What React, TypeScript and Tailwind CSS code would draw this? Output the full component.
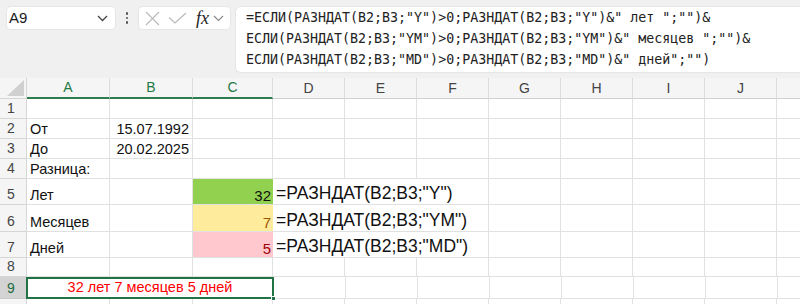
import React from "react";

const COLS = ["A", "B", "C", "D", "E", "F", "G", "H", "I", "J", ""];
const W = [83, 83, 80, 72, 72, 72, 72, 72, 72, 72, 23];

const cellFont = { fontFamily: '"Liberation Sans", Arial, sans-serif' };

function RowNum({ n, h, selected }: { n?: number; h: number; selected?: boolean }) {
  return (
    <div
      className={
        "w-[27px] shrink-0 flex items-end justify-center pr-[4px] pb-[1px] leading-[17px] border-r border-b text-[14px] " +
        (selected
          ? "bg-[#d3d3d3] text-[#1f6b40] border-r-[#1f7a45] border-b-[#c9c9c9]"
          : "bg-[#f5f5f5] text-[#444444] border-[#d6d6d6]")
      }
      style={{ height: h }}
    >
      {n}
    </div>
  );
}

function Empty({ w, h, noRight }: { w: number; h: number; noRight?: boolean }) {
  return (
    <div
      className={"shrink-0 border-b border-[#e1e1e1] " + (noRight ? "" : "border-r")}
      style={{ width: w, height: h }}
    />
  );
}

function TextCell({ w, h, children, cls = "" }: { w: number; h: number; children?: React.ReactNode; cls?: string }) {
  return (
    <div
      className={"shrink-0 border-r border-b border-[#e1e1e1] flex items-end pb-[0px] leading-[17px] whitespace-nowrap overflow-visible text-[14.5px] text-[#111] " + cls}
      style={{ width: w, height: h }}
    >
      {children}
    </div>
  );
}

function StdRow({ n, h, a, b }: { n?: number; h: number; a?: string; b?: string }) {
  return (
    <div className="flex">
      <RowNum n={n} h={h} />
      <TextCell w={W[0]} h={h} cls="pl-[3px]">{a}</TextCell>
      <TextCell w={W[1]} h={h} cls="justify-end pr-[3px]">{b}</TextCell>
      {W.slice(2).map((w, i) => (
        <Empty key={i} w={w} h={h} noRight={i === W.length - 3} />
      ))}
    </div>
  );
}

function ResultRow({ n, label, value, fill, color, formula }: { n: number; label: string; value: string; fill: string; color: string; formula: string }) {
  const h = n === 6 ? 27 : 26;
  return (
    <div className="flex">
      <RowNum n={n} h={h} />
      <TextCell w={W[0]} h={h} cls="pl-[3px]">{label}</TextCell>
      <TextCell w={W[1]} h={h} />
      <div
        className={"shrink-0 border-b border-[#e1e1e1] flex items-end justify-end pr-[2px] pb-[0px] leading-[17px] text-[15px] " + fill + " " + color}
        style={{ width: W[2], height: h }}
      >
        {value}
      </div>
      <div
        className="shrink-0 border-r border-b border-[#e1e1e1] flex items-end pl-[3px] pb-[0px] whitespace-nowrap text-[17.5px] leading-[21px] text-[#111]"
        style={{ width: W[3] + W[4] + W[5], height: h }}
      >
        {formula}
      </div>
      {W.slice(6).map((w, i) => (
        <Empty key={i} w={w} h={h} noRight={i === W.length - 7} />
      ))}
    </div>
  );
}

export default function App() {
  return (
    <div className="w-[800px] h-[304px] overflow-hidden bg-white" style={cellFont}>
      {/* Toolbar */}
      <div className="h-[78px] bg-[#f0f0f0] flex items-start pt-[7px] pl-[7px] overflow-hidden">
        <div className="w-[108px] h-[22px] shrink-0 bg-white rounded-[4px] flex items-center justify-between pl-[2px] pr-[7px] shadow-[0_0_0_1px_#e6e6e6]">
          <span className="text-[15px] text-[#1a1a1a]">A9</span>
          <svg width="11" height="7" viewBox="0 0 11 7" fill="none">
            <path d="M1 1 L5.5 5.5 L10 1" stroke="#444" strokeWidth="1.3" />
          </svg>
        </div>
        <div className="w-[24px] h-[22px] shrink-0 flex flex-col items-center justify-center gap-[2px]">
          <div className="w-[2.5px] h-[2.5px] rounded-full bg-[#555]" />
          <div className="w-[2.5px] h-[2.5px] rounded-full bg-[#555]" />
          <div className="w-[2.5px] h-[2.5px] rounded-full bg-[#555]" />
        </div>
        <div className="w-[91px] h-[22px] shrink-0 bg-white rounded-[4px] flex items-center pl-[6px] shadow-[0_0_0_1px_#e6e6e6]">
          <svg width="15" height="15" viewBox="0 0 15 15" fill="none">
            <path d="M1 1 L14 14 M14 1 L1 14" stroke="#b8b8b8" strokeWidth="1.1" />
          </svg>
          <svg className="ml-[8px]" width="19" height="12" viewBox="0 0 19 12" fill="none">
            <path d="M1 5.5 L7 11 L18 1" stroke="#b8b8b8" strokeWidth="1.1" />
          </svg>
          <span
            className="ml-[9px] text-[18px] italic text-[#222] leading-none"
            style={{ fontFamily: '"Liberation Serif", "Times New Roman", serif' }}
          >
            fx
          </span>
          <svg className="ml-[4px]" width="11" height="7" viewBox="0 0 11 7" fill="none">
            <path d="M1 1 L5.5 5.5 L10 1" stroke="#888" strokeWidth="1.1" />
          </svg>
        </div>
        <div
          className="ml-[6px] w-[580px] h-[65px] shrink-0 bg-white rounded-[5px] pl-[10px] pt-[0px] text-[13.3px] leading-[21px] text-[#222] whitespace-pre shadow-[0_0_0_1px_#e6e6e6]"
          style={{ fontFamily: '"DejaVu Sans Mono", "Liberation Mono", monospace' }}
        >
          <div>=ЕСЛИ(РАЗНДАТ(B2;B3;"Y")&gt;0;РАЗНДАТ(B2;B3;"Y")&amp;" лет ";"")&amp;</div>
          <div>ЕСЛИ(РАЗНДАТ(B2;B3;"YM")&gt;0;РАЗНДАТ(B2;B3;"YM")&amp;" месяцев ";"")&amp;</div>
          <div>ЕСЛИ(РАЗНДАТ(B2;B3;"MD")&gt;0;РАЗНДАТ(B2;B3;"MD")&amp;" дней";"")</div>
        </div>
      </div>

      {/* Column header */}
      <div className="flex h-[21px]">
        <div className="w-[27px] shrink-0 bg-[#f5f5f5] border-r border-b border-[#d6d6d6] relative">
          <svg className="absolute right-[2px] bottom-[2px]" width="17" height="16" viewBox="0 0 17 16">
            <path d="M17 0 L17 16 L0 16 Z" fill="#d0d0d0" />
          </svg>
        </div>
        {COLS.map((c, i) => {
          const sel = i < 3;
          return (
            <div
              key={i}
              className={
                "shrink-0 bg-[#f5f5f5] flex items-center justify-center text-[14px] border-r border-r-[#dcdcdc] " +
                (sel
                  ? "text-[#1f7a45] border-b-2 border-b-[#2e7d4f]"
                  : "text-[#444] border-b border-b-[#d0d0d0]") +
                (i === COLS.length - 1 ? " border-r-0" : "")
              }
              style={{ width: W[i] }}
            >
              {c}
            </div>
          );
        })}
      </div>

      {/* Rows */}
      <StdRow n={1} h={20} />
      <StdRow n={2} h={20} a="От" b="15.07.1992" />
      <StdRow n={3} h={20} a="До" b="20.02.2025" />
      <StdRow n={4} h={20} a="Разница:" />
      <ResultRow n={5} label="Лет" value="32" fill="bg-[#92d050]" color="text-[#111]" formula={'=РАЗНДАТ(B2;B3;"Y")'} />
      <ResultRow n={6} label="Месяцев" value="7" fill="bg-[#ffeb9c]" color="text-[#9c5700]" formula={'=РАЗНДАТ(B2;B3;"YM")'} />
      <ResultRow n={7} label="Дней" value="5" fill="bg-[#ffc7ce]" color="text-[#9c0006]" formula={'=РАЗНДАТ(B2;B3;"MD")'} />
      <StdRow n={8} h={19} />
      <div className="flex">
        <RowNum n={9} h={22} selected />
        <div
          className="shrink-0 relative h-[22px] -ml-[1px] border-2 border-[#217346] flex items-center justify-center text-[14.5px] text-[#ff0000] whitespace-nowrap"
          style={{ width: W[0] + W[1] + W[2] + 2 }}
        >
          32 лет 7 месяцев 5 дней
          <div className="absolute -right-[4px] -bottom-[4px] w-[5px] h-[5px] bg-[#217346] border border-white" />
        </div>
        {W.slice(3).map((w, i) => (
          <Empty key={i} w={w} h={22} noRight={i === W.length - 4} />
        ))}
      </div>
      <StdRow h={20} />
    </div>
  );
}
